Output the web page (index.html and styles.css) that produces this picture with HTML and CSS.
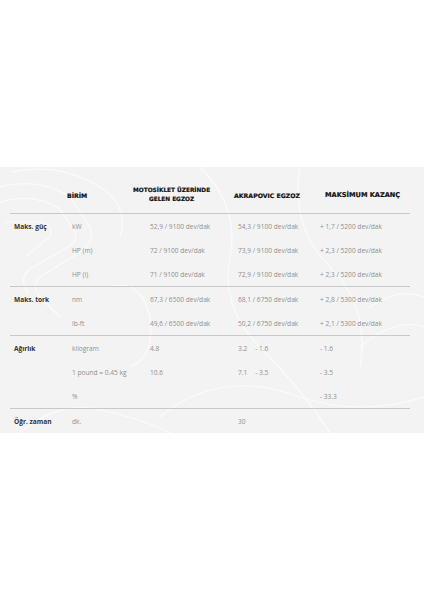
FILE: index.html
```html
<!DOCTYPE html>
<html lang="tr">
<head>
<meta charset="utf-8">
<title>Akrapovic</title>
<link rel="stylesheet" href="styles.css">
</head>
<body>
<div class="top-space"></div>
<section class="band">
  <svg class="watermark" width="424" height="266" viewBox="0 0 424 266" aria-hidden="true">
    <g fill="none" stroke="#fbfbfb" stroke-width="1.2">
      <path d="M0 20 Q40 10 70 30 L90 60 Q95 75 80 85 L40 110 Q30 118 40 130 L60 150"/>
      <path d="M0 35 Q35 25 60 42 L75 65 Q78 75 68 80 L30 102 Q18 112 28 126"/>
      <path d="M5 55 L40 55 Q55 58 50 70 L25 90"/>
      <path d="M10 5 Q60 -5 100 20 Q130 40 120 70"/>
      <path d="M200 0 Q240 40 230 90 Q220 140 260 180 Q300 220 330 266"/>
      <path d="M300 0 Q290 60 330 100 Q370 140 360 200"/>
      <path d="M160 250 Q220 200 300 230 Q360 250 424 230"/>
      <path d="M370 140 Q400 120 424 130 M360 180 Q395 150 424 160"/>
      <path d="M110 120 Q140 110 150 150 Q155 190 130 200"/>
      <path d="M20 266 Q60 230 110 245 Q150 255 170 266"/>
    </g>
  </svg>
  <div class="table">
    <div class="head">
      <div></div>
      <div class="h">BİRİM</div>
      <div class="h h-small"><span class="two">MOTOSİKLET ÜZERİNDE<br>GELEN EGZOZ</span></div>
      <div class="h">AKRAPOVIC EGZOZ</div>
      <div class="h h-big">MAKSİMUM KAZANÇ</div>
    </div>

    <div class="group">
      <div class="lbl">Maks. güç</div><div>kW</div><div>52,9 / 9100 dev/dak</div><div>54,3 / 9100 dev/dak</div><div>+ 1,7 / 5200 dev/dak</div>
      <div></div><div>HP (m)</div><div>72 / 9100 dev/dak</div><div>73,9 / 9100 dev/dak</div><div>+ 2,3 / 5200 dev/dak</div>
      <div></div><div>HP (i)</div><div>71 / 9100 dev/dak</div><div>72,9 / 9100 dev/dak</div><div>+ 2,3 / 5200 dev/dak</div>
    </div>

    <div class="group">
      <div class="lbl">Maks. tork</div><div>nm</div><div>67,3 / 6500 dev/dak</div><div>68,1 / 6750 dev/dak</div><div>+ 2,8 / 5300 dev/dak</div>
      <div></div><div>lb-ft</div><div>49,6 / 6500 dev/dak</div><div>50,2 / 6750 dev/dak</div><div>+ 2,1 / 5300 dev/dak</div>
    </div>

    <div class="group">
      <div class="lbl">Ağırlık</div><div>kilogram</div><div>4.8</div><div>3.2<span class="diff">- 1.6</span></div><div>- 1.6</div>
      <div></div><div>1 pound = 0.45 kg</div><div>10.6</div><div>7.1<span class="diff">- 3.5</span></div><div>- 3.5</div>
      <div></div><div>%</div><div></div><div></div><div>- 33.3</div>
    </div>

    <div class="group">
      <div class="lbl">Öğr. zaman</div><div>dk.</div><div></div><div>30</div><div></div>
    </div>
  </div>
</section>
</body>
</html>
```

FILE: styles.css
```css
html, body {
  margin: 0;
  padding: 0;
  background: #ffffff;
}

.top-space {
  height: 167px;
}

.band {
  position: relative;
  background: #f3f3f3;
  height: 266px;
  overflow: hidden;
}

.watermark {
  position: absolute;
  left: 0;
  top: 0;
}

.table {
  position: relative;
  margin-left: 10px;
  width: 400px;
  font-family: "Open Sans", "Liberation Sans", sans-serif;
  font-size: 6.6px;
  color: #8f8f8f;
}

.head {
  display: grid;
  grid-template-columns: 53px 66px 101px 91px 85px;
  padding-left: 4px;
  height: 46px;
  box-sizing: border-box;
  padding-top: 10px;
  align-items: center;
}

.h {
  font-family: "DejaVu Sans", "Liberation Sans", sans-serif;
  font-weight: bold;
  font-size: 6.2px;
  color: #111;
  white-space: nowrap;
  -webkit-text-stroke: 0.2px #111;
}

.h-small {
  font-size: 5.8px;
  line-height: 9px;
}

.two {
  display: inline-block;
  text-align: center;
}

.h-big {
  font-size: 6.6px;
}

.group {
  display: grid;
  grid-template-columns: 58px 78px 88px 82px 90px;
  grid-auto-rows: 24px;
  align-items: center;
  padding-left: 4px;
  border-top: 1px solid #c8c8c8;
}

.group > div {
  white-space: nowrap;
}

.lbl {
  font-weight: bold;
  color: #333333;
}

.diff {
  margin-left: 8px;
}
```
